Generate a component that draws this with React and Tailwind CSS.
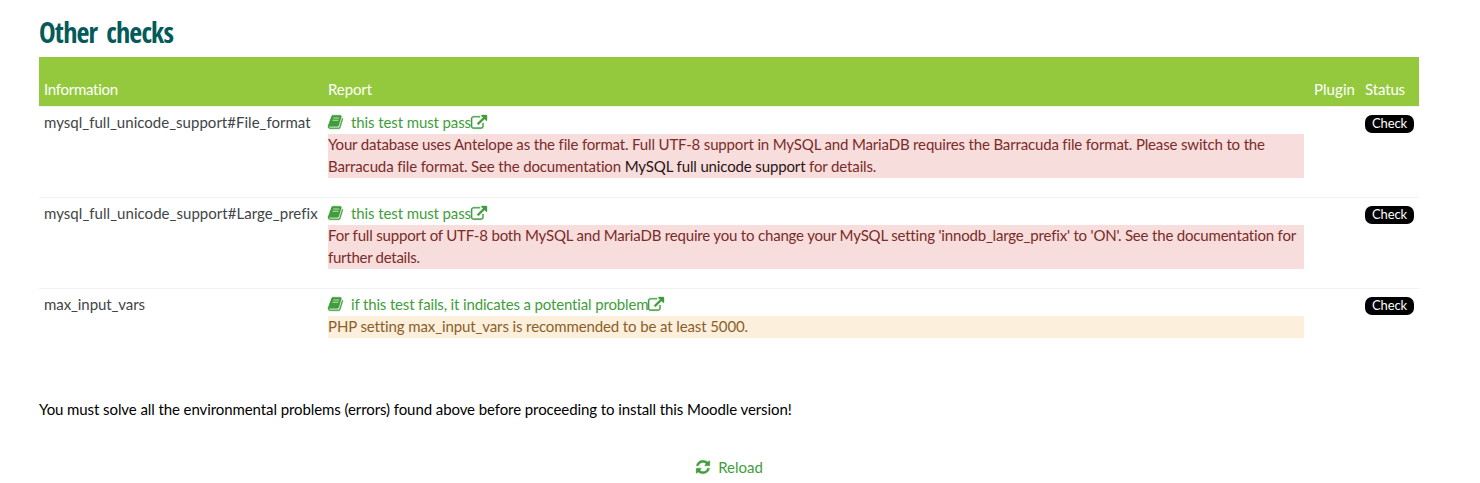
const BOOK =
  "M1639 478q40 57 18 129l-275 906q-19 64-76.5 107.5t-122.5 43.5h-923q-77 0-148.5-53.5t-99.5-131.5q-24-67-2-127 0-4 3-27t4-37q1-8-3-21.5t-3-19.5q2-11 8-21t16.5-23.5 16.5-23.5q23-38 45-91.5t30-91.5q3-10 .5-30t-.5-28q3-11 17-28t17-23q21-36 42-92t25-90q1-9-2.5-32t.5-28q4-13 22-30.5t22-22.5q19-26 42.5-84.5t27.5-96.5q1-8-3-25.5t-2-26.5q2-8 9-18t18-23 17-21q8-12 16.5-30.5t15-35 16-36 19.5-32 26.5-23.5 36-11.5 47.5 5.5l-1 3q38-9 51-9h761q74 0 114 56t18 130l-274 906q-36 119-71.5 153.5t-128.5 34.5h-869q-27 0-38 15-11 16-1 43 24 70 144 70h923q29 0 56-15.5t35-41.5l300-987q7-22 5-57 38 15 59 43zm-1064 2q-4 13 2 22.5t20 9.5h608q13 0 25.5-9.5t16.5-22.5l21-64q4-13-2-22.5t-20-9.5h-608q-13 0-25.5 9.5t-16.5 22.5zm-83 256q-4 13 2 22.5t20 9.5h608q13 0 25.5-9.5t16.5-22.5l21-64q4-13-2-22.5t-20-9.5h-608q-13 0-25.5 9.5t-16.5 22.5z";
const EXTERNAL =
  "M1408 928v320q0 119-84.5 203.5t-203.5 84.5h-832q-119 0-203.5-84.5t-84.5-203.5v-832q0-119 84.5-203.5t203.5-84.5h704q14 0 23 9t9 23v64q0 14-9 23t-23 9h-704q-66 0-113 47t-47 113v832q0 66 47 113t113 47h832q66 0 113-47t47-113v-320q0-14 9-23t23-9h64q14 0 23 9t9 23zm384-864v512q0 26-19 45t-45 19-45-19l-176-176-652 652q-10 10-23 10t-23-10l-114-114q-10-10-10-23t10-23l652-652-176-176q-19-19-19-45t19-45 45-19h512q26 0 45 19t19 45z";
const REFRESH =
  "M1639 1056q0 5-1 7-64 268-268 434.5t-478 166.5q-146 0-282.5-55t-243.5-157l-129 129q-19 19-45 19t-45-19-19-45v-448q0-26 19-45t45-19h448q26 0 45 19t19 45-19 45l-137 137q71 66 161 102t187 36q134 0 250-65t186-179q11-17 53-117 8-23 30-23h192q13 0 22.5 9.5t9.5 22.5zm25-800v448q0 26-19 45t-45 19h-448q-26 0-45-19t-19-45 19-45l138-138q-148-137-349-137-134 0-250 65t-186 179q-11 17-53 117-8 23-30 23h-199q-13 0-22.5-9.5t-9.5-22.5v-7q65-268 270-434.5t480-166.5q146 0 284 55.5t245 156.5l130-129q19-19 45-19t45 19 19 45z";

function Icon({ d, className }) {
  return (
    <svg viewBox="0 0 1792 1792" fill="currentColor" stroke="currentColor" strokeWidth="40" className={`size-4 shrink-0 overflow-visible ${className}`}>
      <path d={d} />
    </svg>
  );
}

function Row({ name, nameClass, link, linkClass, box, children }) {
  return (
    <div className="grid h-[91px] grid-cols-[284px_1fr_51px_59px] border-t border-[#f2f2f2] pt-[5px] leading-5">
      <div className={`pl-[5px] ${nameClass}`}>{name}</div>
      <div className="px-[5px]">
        <a className="flex h-[22px] text-[#419d3c]">
          <Icon d={BOOK} className="mt-0.5 mr-[7px]" />
          <span className={linkClass}>{link}</span>
          <Icon d={EXTERNAL} className="mt-[3px]" />
        </a>
        <div className={`flex flex-col gap-0.5 pb-0.5 whitespace-nowrap ${box}`}>{children}</div>
      </div>
      <div />
      <div className="pt-[3px] pl-[5px]">
        <span className="flex h-[18px] w-[49px] items-center justify-center rounded-[7px] bg-black pb-px text-[13px] leading-none tracking-[-0.12px] text-white">
          Check
        </span>
      </div>
    </div>
  );
}

export default function App() {
  return (
    <main className="h-[483px] overflow-hidden bg-white pr-[61px] pl-[39px] font-['Lato',sans-serif] text-[15px] text-[#3f4448]">
      <h2 className="h-[57px] pt-[13px] font-['Open_Sans_Condensed',sans-serif] text-[28px] leading-[38px] font-bold tracking-[-0.8px] text-[#045a5a] [word-spacing:3px]">
        Other checks
      </h2>
      <div className="grid h-[49px] grid-cols-[284px_1fr_51px_59px] bg-[#94c93d] pt-[21px] leading-[22px] text-white">
        <span className="pl-[5px] tracking-[-0.28px]">Information</span>
        <span className="pl-[5px] tracking-[-0.1px]">Report</span>
        <span className="pl-[5px] tracking-[0.06px]">Plugin</span>
        <span className="pl-[5px] tracking-[-0.13px]">Status</span>
      </div>
      <Row
        name="mysql_full_unicode_support#File_format"
        nameClass="tracking-[0.02px]"
        link="this test must pass"
        linkClass="tracking-[-0.1px]"
        box="bg-[#f7dddc] text-[#7a2c29]"
      >
        <p className="tracking-[-0.157px]">
          Your database uses Antelope as the file format. Full UTF-8 support in MySQL and MariaDB requires the Barracuda file format. Please switch to the
        </p>
        <p className="tracking-[-0.135px]">
          Barracuda file format. See the documentation <a className="text-[#2b1414]">MySQL full unicode support</a> for details.
        </p>
      </Row>
      <Row
        name="mysql_full_unicode_support#Large_prefix"
        nameClass="tracking-[0.04px]"
        link="this test must pass"
        linkClass="tracking-[-0.1px]"
        box="bg-[#f7dddc] text-[#7a2c29]"
      >
        <p className="tracking-[-0.181px]">
          For full support of UTF-8 both MySQL and MariaDB require you to change your MySQL setting 'innodb_large_prefix' to 'ON'. See the documentation for
        </p>
        <p className="tracking-[-0.27px]">further details.</p>
      </Row>
      <Row
        name="max_input_vars"
        nameClass="tracking-[-0.078px]"
        link="if this test fails, it indicates a potential problem"
        linkClass="tracking-[-0.15px]"
        box="bg-[#fcefdc] text-[#8a5f2a]"
      >
        <p className="tracking-[-0.113px]">PHP setting max_input_vars is recommended to be at least 5000.</p>
      </Row>
      <p className="mt-[19px] leading-[22px] tracking-[-0.084px] text-black">
        You must solve all the environmental problems (errors) found above before proceeding to install this Moodle version!
      </p>
      <a className="mt-9 flex justify-center leading-[22px] text-[#419d3c]">
        <Icon d={REFRESH} className="mt-[3px] mr-[7px]" />
        <span>Reload</span>
      </a>
    </main>
  );
}
